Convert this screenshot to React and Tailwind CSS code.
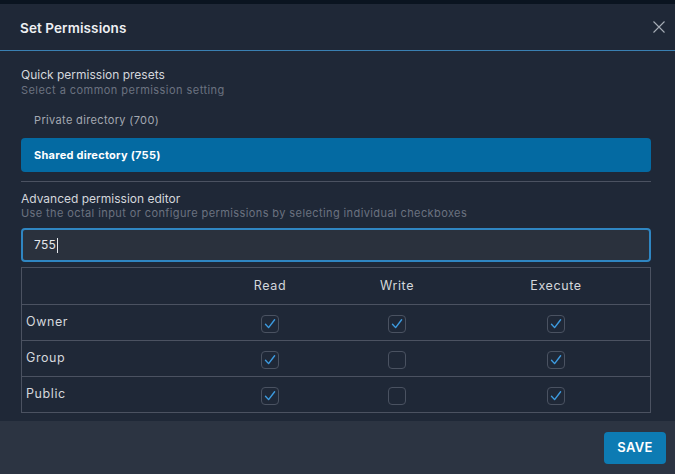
import React from "react";

function Check({ on }) {
  return (
    <div className="w-[18px] h-[18px] rounded-[4px] border border-[#4a5261] flex items-center justify-center">
      {on && (
        <svg width="14" height="14" viewBox="0 0 14 14" fill="none">
          <path d="M2.5 7.2 L5.6 10.6 L11.6 2.8" stroke="#3d9be0" strokeWidth="1.4" strokeLinecap="round" strokeLinejoin="round" />
        </svg>
      )}
    </div>
  );
}

const rows = [
  ["Owner", true, true, true],
  ["Group", true, false, true],
  ["Public", true, false, true],
];

export default function App() {
  return (
    <div className="w-[675px] h-[476px] bg-white flex flex-col font-['Inter',sans-serif]">
      <div className="h-[4px] bg-[#0a1420]" />
      <div className="bg-[#1f2837] flex flex-col">
        <div className="h-[47px] pl-5 pr-[9px] flex items-center justify-between border-b-[1.5px] border-[#3a80b2]">
          <span className="text-[13.5px] font-semibold text-[#eef0f3] tracking-[0.1px] pt-[2px]">Set Permissions</span>
          <svg width="14" height="14" viewBox="0 0 14 14">
            <path d="M1.5 1.5 L12.5 12.5 M12.5 1.5 L1.5 12.5" stroke="#a7adb7" strokeWidth="1.1" />
          </svg>
        </div>
        <div className="pl-[21px] pr-[24px] pt-[16px] pb-[8px] flex flex-col">
          <div className="text-[12px] leading-4 text-[#d4d7dc]">Quick permission presets</div>
          <div className="-mt-px text-[11px] leading-4 text-[#6b7280] tracking-[0.45px]">Select a common permission setting</div>
          <div className="mt-[4px] h-[34px] flex items-center px-[13px] pt-[2px] text-[11px] text-[#a4a9b2] tracking-[0.35px]">Private directory (700)</div>
          <div className="mt-[2px] h-[34px] flex items-center px-[13px] text-[11px] font-bold text-white bg-[#046aa2] rounded-[4px] tracking-[0.25px]">Shared directory (755)</div>
          <div className="mt-[9px] h-px bg-[#4b5261]" />
          <div className="mt-[9px] text-[12px] leading-4 text-[#d4d7dc]">Advanced permission editor</div>
          <div className="-mt-[2px] text-[11px] leading-4 text-[#6b7280] tracking-[0.4px]">Use the octal input or configure permissions by selecting individual checkboxes</div>
          <div className="mt-[7px] h-[34px] rounded-[4px] border-2 border-[#2f86c2] bg-[#2a313d] flex items-center px-[11px] text-[12px] text-[#e5e7eb] tracking-[0.3px]">
            755<span className="inline-block w-px h-[15px] bg-[#e5e7eb] ml-px" />
          </div>
          <div className="mt-[5px] border border-[#4b5261] text-[12.5px] text-[#d4d7dc] tracking-[0.6px]">
            <div className="grid grid-cols-[186px_124px_130px_188px] h-[36px] items-center">
              <div />
              <div className="text-center">Read</div>
              <div className="text-center">Write</div>
              <div className="text-center">Execute</div>
            </div>
            {rows.map(([name, r, w, x]) => (
              <div key={name} className="grid grid-cols-[186px_124px_130px_188px] h-[36px] items-center border-t border-[#4b5261]">
                <div className="pl-[4px] pb-[1px]">{name}</div>
                <div className="flex justify-center pt-[2px]"><Check on={r} /></div>
                <div className="flex justify-center pt-[2px]"><Check on={w} /></div>
                <div className="flex justify-center pt-[2px]"><Check on={x} /></div>
              </div>
            ))}
          </div>
        </div>
        <div className="h-[53px] bg-[#2c3442] flex items-center justify-end pr-[9px]">
          <button className="h-[32px] w-[62px] rounded-[4px] bg-[#0d7bb3] text-white text-[13px] font-semibold tracking-[0.3px]">SAVE</button>
        </div>
      </div>
    </div>
  );
}
